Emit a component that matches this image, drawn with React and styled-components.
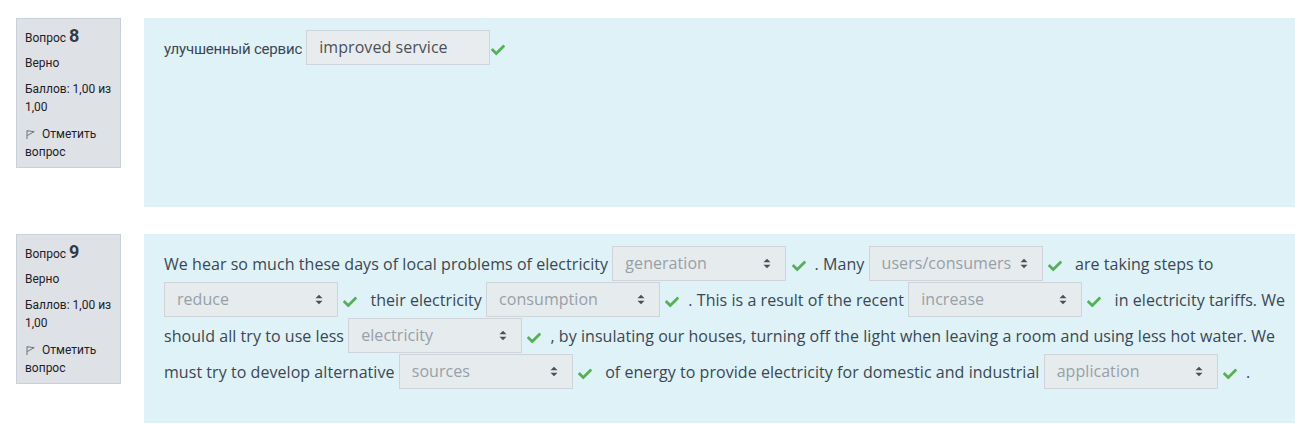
import React from "react";
import styled, { createGlobalStyle } from "styled-components";
import { FaCheck } from "react-icons/fa";

const GlobalStyle = createGlobalStyle`
  html, body { margin: 0; padding: 0; background: #ffffff; }
  body { font-family: "Open Sans", "Liberation Sans", sans-serif; }
`;

const Page = styled.div`
  display: flex;
  flex-direction: column;
  gap: 27px;
  padding: 18px 0 0 16px;
`;

const Question = styled.div`
  display: flex;
  align-items: flex-start;
  gap: 23px;
`;

const Info = styled.div`
  flex: 0 0 105px;
  box-sizing: border-box;
  width: 105px;
  padding: 6px 8px;
  background: #dee2e6;
  border: 1px solid #cad0d7;
  font-family: Roboto, "Liberation Sans", sans-serif;
  font-size: 12px;
  line-height: 18px;
  color: #1d2125;
`;

const QTitle = styled.h3`
  margin: 0;
  font-weight: 400;
  font-size: 12px;
  line-height: 22px;
  height: 22px;
`;

const QNo = styled.span`
  font-size: 18px;
  font-weight: 700;
  margin-left: 3px;
  color: #343a40;
`;

const InfoLine = styled.div`
  margin-top: ${(p) => p.$gap}px;
`;

const FlagLink = styled.div`
  margin-top: 9px;
  color: #1d2125;
`;

const FlagIcon = styled.svg`
  width: 9px;
  height: 9px;
  margin: 0 7px 0 1px;
  vertical-align: -1px;
`;

const Formulation = styled.div`
  flex: 1;
  box-sizing: border-box;
  min-height: 189px;
  padding: 12px 0 31px 20px;
  background: #def2f8;
  color: #3c4752;
  font-size: 16px;
  letter-spacing: 0.05px;
  line-height: 36px;
`;

const Para = styled.div``;

const CyrText = styled.span`
  font-family: Roboto, "Liberation Sans", sans-serif;
  font-size: 15px;
  letter-spacing: -0.2px;
`;

const TextInput = styled.span`
  display: inline-block;
  box-sizing: border-box;
  width: 184px;
  height: 35px;
  padding: 0 12px;
  vertical-align: top;
  line-height: 33px;
  background: #e9ecef;
  border: 1px solid #ced4da;
  color: #495057;
`;

const Select = styled.span`
  display: inline-flex;
  align-items: center;
  justify-content: space-between;
  box-sizing: border-box;
  width: 174px;
  height: 35px;
  padding: 0 14px 0 12px;
  vertical-align: top;
  line-height: 33px;
  background: #e6ebee;
  border: 1px solid #ced4da;
  color: #98a0a7;
  white-space: nowrap;
`;

const SortIcon = styled.svg`
  width: 8px;
  height: 11px;
  flex: 0 0 auto;
`;

const Check = styled.span`
  display: inline-block;
  width: 16px;
  margin: 0 8px 0 0;
  text-align: center;
  color: #56b156;
  vertical-align: middle;
  line-height: 0;
  svg { width: 14px; height: 14px; }
`;

const ControlWrap = styled.span`
  white-space: nowrap;
`;

function Flag() {
  return (
    <FlagIcon viewBox="0 0 9 9" fill="none" stroke="#6a737b" strokeWidth="1">
      <path d="M1 0.5 V9" />
      <path d="M1 0.8 L8.2 1.6 L1.2 5.6" />
    </FlagIcon>
  );
}

function Sort() {
  return (
    <SortIcon viewBox="0 0 8 11">
      <path d="M0.5 4.3 L4 0.8 L7.5 4.3 Z" fill="#495057" />
      <path d="M0.5 6.7 L7.5 6.7 L4 10.2 Z" fill="#495057" />
    </SortIcon>
  );
}

function Tick() {
  return (
    <Check title="Верно">
      <FaCheck />
    </Check>
  );
}

function Control({ value }) {
  return (
    <ControlWrap>
      <Select>
        <span>{value}</span>
        <Sort />
      </Select>{" "}
      <Tick />
    </ControlWrap>
  );
}

function InfoBox({ no }) {
  return (
    <Info>
      <QTitle>
        Вопрос<QNo>{no}</QNo>
      </QTitle>
      <InfoLine $gap={7}>Верно</InfoLine>
      <InfoLine $gap={8}>Баллов: 1,00 из 1,00</InfoLine>
      <FlagLink>
        <Flag />
        Отметить вопрос
      </FlagLink>
    </Info>
  );
}

export default function App() {
  return (
    <>
      <GlobalStyle />
      <Page>
        <Question>
          <InfoBox no={8} />
          <Formulation>
            <Para>
              <CyrText>улучшенный сервис</CyrText>{" "}
              <TextInput>improved service</TextInput>
              <Tick />
            </Para>
          </Formulation>
        </Question>
        <Question>
          <InfoBox no={9} />
          <Formulation>
            <Para>
              We hear so much these days of local problems of electricity{" "}
              <Control value="generation" />. Many{" "}
              <Control value="users/consumers" /> are taking steps to{" "}
              <Control value="reduce" /> their electricity{" "}
              <Control value="consumption" />. This is a result of the recent{" "}
              <Control value="increase" /> in electricity tariffs. We should all
              try to use less <Control value="electricity" />, by insulating our
              houses, turning off the light when leaving a room and using less
              hot water. We must try to develop alternative{" "}
              <Control value="sources" /> of energy to provide electricity for
              domestic and industrial <Control value="application" />.
            </Para>
          </Formulation>
        </Question>
      </Page>
    </>
  );
}
